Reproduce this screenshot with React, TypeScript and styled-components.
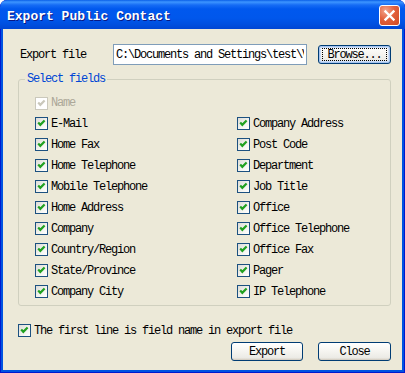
import styled, { createGlobalStyle } from "styled-components";

const GlobalStyle = createGlobalStyle`
  html, body {
    margin: 0;
    padding: 0;
    background: #ffffff;
  }
  #root {
    width: 405px;
    height: 373px;
  }
`;

const leftFields = [
  "E-Mail",
  "Home Fax",
  "Home Telephone",
  "Mobile Telephone",
  "Home Address",
  "Company",
  "Country/Region",
  "State/Province",
  "Company City",
];

const rightFields = [
  "Company Address",
  "Post Code",
  "Department",
  "Job Title",
  "Office",
  "Office Telephone",
  "Office Fax",
  "Pager",
  "IP Telephone",
];

function CheckBox({ label, disabled }: { label: string; disabled?: boolean }) {
  return (
    <CheckRow>
      <Box $disabled={disabled}>
        <svg width="11" height="11" viewBox="0 0 11 11">
          <path
            d="M2.2 4.6 L4.3 6.8 L8.6 2.4"
            fill="none"
            stroke={disabled ? "#cac8bb" : "#21a121"}
            strokeWidth="2.2"
          />
        </svg>
      </Box>
      <Label $disabled={disabled}>{label}</Label>
    </CheckRow>
  );
}

export default function App() {
  return (
    <>
      <GlobalStyle />
      <Window>
        <TitleBar>
          <Title>Export Public Contact</Title>
          <CloseButton>
            <svg width="19" height="19" viewBox="0 0 19 19">
              <path
                d="M5.5 5.5 L13.5 13.5 M13.5 5.5 L5.5 13.5"
                stroke="#ffffff"
                strokeWidth="2.4"
                strokeLinecap="square"
              />
            </svg>
          </CloseButton>
        </TitleBar>
        <Client>
          <FileRow>
            <FieldLabel>Export file</FieldLabel>
            <PathInput readOnly value="C:\Documents and Settings\test\Visitors.csv" />
            <Button $width={73} $default>
              <Focus>Browse...</Focus>
            </Button>
          </FileRow>
          <Group>
            <Legend>Select fields</Legend>
            <FieldGrid>
              <CheckBox label="Name" disabled />
              <span />
              {leftFields.map((f, i) => [
                <CheckBox key={f} label={f} />,
                <CheckBox key={rightFields[i]} label={rightFields[i]} />,
              ])}
            </FieldGrid>
          </Group>
          <FooterCheck>
            <CheckBox label="The first line is field name in export file" />
          </FooterCheck>
          <ButtonRow>
            <Button $width={72}>Export</Button>
            <Button $width={73}>Close</Button>
          </ButtonRow>
        </Client>
      </Window>
    </>
  );
}

const mono = `"Liberation Mono", "DejaVu Sans Mono", monospace`;

const Window = styled.div`
  width: 405px;
  height: 373px;
  display: flex;
  flex-direction: column;
  border-radius: 7px 7px 0 0;
  overflow: hidden;
  background: #0053e1;
  box-shadow: inset 1px 0 #0019cf, inset -1px 0 #0019cf, inset 0 -1px #0019cf;
`;

const TitleBar = styled.div`
  height: 29px;
  flex: none;
  display: flex;
  align-items: center;
  justify-content: space-between;
  padding: 0 5px 0 7px;
  background: linear-gradient(
    to bottom,
    #0a5fe8 0px,
    #3d95ff 2px,
    #166cf5 5px,
    #0058ee 9px,
    #0057ec 18px,
    #0050e0 24px,
    #0046d3 29px
  );
  border-radius: 7px 7px 0 0;
`;

const Title = styled.div`
  font-family: ${mono};
  font-size: 13px;
  font-weight: bold;
  color: #ffffff;
  text-shadow: 1px 1px #0a1883;
  padding-top: 3px;
`;

const CloseButton = styled.div`
  width: 21px;
  height: 21px;
  box-sizing: border-box;
  border: 1px solid #ffffff;
  border-radius: 3px;
  background: radial-gradient(circle at 30% 25%, #f3a48c 0%, #e2613d 45%, #d14a22 100%);
  display: flex;
  align-items: center;
  justify-content: center;
  margin-top: 2px;
`;

const Client = styled.div`
  flex: 1;
  margin: 0 3px 3px;
  background: #ece9d8;
  padding: 15px 11px 0 15px;
  display: flex;
  flex-direction: column;
  font-family: ${mono};
  font-size: 12px;
  letter-spacing: -1.2px;
  color: #000000;
`;

const FileRow = styled.div`
  height: 21px;
  display: flex;
  align-items: center;
`;

const FieldLabel = styled.div`
  width: 95px;
  padding-left: 2px;
  box-sizing: border-box;
`;

const PathInput = styled.input`
  width: 194px;
  height: 21px;
  box-sizing: border-box;
  border: 1px solid #7f9db9;
  background: #ffffff;
  padding: 0 2px;
  margin: 0 11px 0 0;
  font: inherit;
  letter-spacing: inherit;
  color: #000000;
  outline: none;
`;

const Button = styled.button<{ $width: number; $default?: boolean }>`
  width: ${(p) => p.$width}px;
  height: 19px;
  box-sizing: border-box;
  padding: 0;
  border: 1px solid #003c74;
  border-radius: 3px;
  background: linear-gradient(to bottom, #ffffff 0%, #f6f5f1 45%, #ecebe6 85%, #d8d2c6 100%);
  box-shadow: ${(p) =>
    p.$default
      ? "inset 0 0 0 1px #a6c3ee, inset 0 0 0 2px #cddff8"
      : "inset 0 -1px #d6d0c5"};
  font: inherit;
  letter-spacing: inherit;
  color: #000000;
  display: flex;
  align-items: center;
  justify-content: center;
`;

const Focus = styled.span`
  display: flex;
  align-items: center;
  justify-content: center;
  width: 65px;
  height: 13px;
  border: 1px dotted #000000;
  box-sizing: border-box;
`;

const Group = styled.fieldset`
  margin: 7px 0 0;
  padding: 7px 0 3px 0;
  border: 1px solid #d0d0bf;
  border-radius: 3px;
  min-width: 0;
`;

const Legend = styled.legend`
  margin-left: 6px;
  padding: 0 2px;
  line-height: 14px;
  color: #0046d5;
`;

const FieldGrid = styled.div`
  display: grid;
  padding-left: 16px;
  grid-template-columns: 202px 1fr;
  grid-template-rows: 20px repeat(9, 21px);
`;

const CheckRow = styled.div`
  display: flex;
  align-items: center;
  gap: 3px;
  white-space: nowrap;
`;

const Box = styled.span<{ $disabled?: boolean }>`
  width: 13px;
  height: 13px;
  box-sizing: border-box;
  flex: none;
  border: 1px solid ${(p) => (p.$disabled ? "#cac8bb" : "#1c5180")};
  background: ${(p) =>
    p.$disabled ? "#ffffff" : "linear-gradient(135deg, #dcdcd7 0%, #f4f4f0 60%, #ffffff 100%)"};
  display: flex;
`;

const Label = styled.span<{ $disabled?: boolean }>`
  color: ${(p) => (p.$disabled ? "#aca899" : "#000000")};
`;

const FooterCheck = styled.div`
  height: 21px;
  margin-top: 14px;
  display: flex;
  align-items: center;
`;

const ButtonRow = styled.div`
  margin-top: 1px;
  display: flex;
  justify-content: flex-end;
  gap: 15px;
`;
